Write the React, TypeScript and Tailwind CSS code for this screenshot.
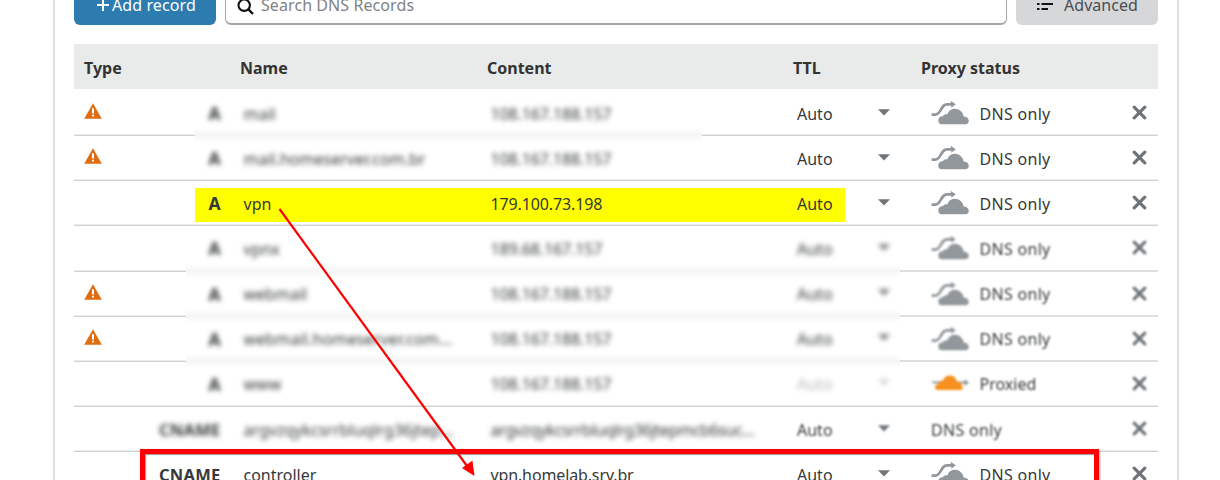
import React from 'react';

type Mode = 'sharp' | 'soft' | 'blur';

interface DnsRecord {
  type: string;
  name: string;
  content: string;
  warn?: boolean;
  text: Mode;
  ttl: Mode;
  status: Mode;
  proxy: 'dns' | 'proxied' | 'none';
  faded?: boolean;
  highlight?: boolean;
  rule: 'full' | 'left' | 'middle';
}

const records: DnsRecord[] = [
  { type: 'A', name: 'mail', content: '108.167.188.157', warn: true, text: 'blur', ttl: 'sharp', status: 'sharp', proxy: 'dns', rule: 'left' },
  { type: 'A', name: 'mail.homeserver.com.br', content: '108.167.188.157', warn: true, text: 'blur', ttl: 'sharp', status: 'sharp', proxy: 'dns', rule: 'full' },
  { type: 'A', name: 'vpn', content: '179.100.73.198', text: 'sharp', ttl: 'sharp', status: 'sharp', proxy: 'dns', highlight: true, rule: 'full' },
  { type: 'A', name: 'vpnx', content: '189.68.167.157', text: 'blur', ttl: 'blur', status: 'soft', proxy: 'dns', rule: 'middle' },
  { type: 'A', name: 'webmail', content: '108.167.188.157', warn: true, text: 'blur', ttl: 'blur', status: 'soft', proxy: 'dns', rule: 'middle' },
  { type: 'A', name: 'webmail.homeserver.com...', content: '108.167.188.157', warn: true, text: 'blur', ttl: 'blur', status: 'soft', proxy: 'dns', rule: 'middle' },
  { type: 'A', name: 'www', content: '108.167.188.157', text: 'blur', ttl: 'blur', status: 'soft', proxy: 'proxied', faded: true, rule: 'full' },
  { type: 'CNAME', name: 'argvzqykcsrrbluqlrg36jtep...', content: 'argvzqykcsrrbluqlrg36jtepmcb6suc...', text: 'blur', ttl: 'soft', status: 'soft', proxy: 'none', rule: 'full' },
  { type: 'CNAME', name: 'controller', content: 'vpn.homelab.srv.br', text: 'sharp', ttl: 'sharp', status: 'sharp', proxy: 'dns', rule: 'full' },
];

const blurClass: Record<Mode, string> = {
  sharp: '',
  soft: 'blur-[0.8px]',
  blur: 'blur-[2.8px]',
};

const grid = 'grid grid-cols-[157px_247px_306px_128px_1fr]';
const line = 'h-[2px] border-t border-[#ececed] bg-[#d0d1d3]';

function Warning() {
  return (
    <svg width="18" height="16" viewBox="0 0 18 16">
      <path d="M9 0.300 17.800 15.700H0.200Z" fill="#e06d10" />
      <path d="M8 5.200h2v5.300H8zM8 11.700h2v1.900H8z" fill="#fff" />
    </svg>
  );
}

function GreyCloud() {
  return (
    <svg width="38" height="25" viewBox="0 0 38 25" fill="#92979b">
      <path d="M0.600 14.600h3.800c2.600 0 3.600-1.600 5.200-4.400 1.800-3.400 3.200-5.900 6.600-5.900h4" fill="none" stroke="#92979b" strokeWidth="2.700" />
      <path d="M19.600 0.800 24.800 4.300 20.400 7.800Z" />
      <path
        d="M10.600 24.200C8.600 24.200 7.300 22.600 7.300 20.500c0-2.500 1.800-4.500 4.700-4.200.5-1.500 2.300-2.500 4.300-1.800C17.300 11 20.200 8.700 23.700 8.700c4.600 0 8.200 3.200 8.900 7.700 3 .1 5.200 1.900 5.200 4.300 0 2.100-1.300 3.500-3.300 3.500z"
        stroke="#fff"
        strokeWidth="1.800"
        paintOrder="stroke"
      />
    </svg>
  );
}

function OrangeCloud() {
  return (
    <svg width="38" height="16" viewBox="0 0 38 16">
      <path d="M0 6.600h34v2H2.500z" fill="#92979b" />
      <path d="M33.500 4.200 38 7.600 33.500 11Z" fill="#92979b" />
      <path d="M6.500 15C4.300 15 3.700 13 4.200 11.300c.5-1.600 2-2.300 3.300-2.100C7.700 6.500 9.800 5 12 5.700c.8-3.400 3.900-5.400 7-5.300 3.700.1 6.400 2.500 6.900 6.100 3 .2 6 2.600 5.600 7.100 0 .9-.4 1.400-1.200 1.400z" fill="#f6901e" />
    </svg>
  );
}

function Cross() {
  return (
    <svg width="15" height="15" viewBox="0 0 15 15">
      <path d="M2.200 2.200 12.800 12.800M12.800 2.200 2.200 12.800" stroke="#6f7479" strokeWidth="3.200" strokeLinecap="round" />
    </svg>
  );
}

function Rule({ kind }: { kind: DnsRecord['rule'] }) {
  if (kind === 'full') return <div className={`${line} w-full`} />;
  const left = kind === 'left';
  return (
    <div className="flex h-[2px] w-full items-end">
      <div className={`${line} ${left ? 'w-[121px]' : 'w-[112px]'}`} />
      <div className={`h-[14px] shrink-0 translate-y-[6px] bg-linear-to-b from-white via-[#f5f5f5] to-white ${left ? 'w-[507px]' : 'w-[714px]'}`} />
      <div className={left ? `${line} flex-1` : 'h-[2px] flex-1 bg-[#dddfe0] blur-[0.6px]'} />
    </div>
  );
}

function contentTracking(content: string) {
  return content.endsWith('...') ? '-tracking-[0.38px]' : 'tracking-[-0.13px]';
}

function Row({ r }: { r: DnsRecord }) {
  return (
    <div className="relative flex h-[45.15px] shrink-0 flex-col">
      {r.highlight && <div className="absolute top-[7px] left-[121px] h-[34px] w-[650px] bg-[#ffff00]" />}
      <div className={`${grid} relative z-10 min-h-0 flex-1 items-center`}>
        <div className="flex items-center justify-between pr-[10.5px] pl-[10px]">
          <span className="-mt-[3px]">{r.warn && <Warning />}</span>
          <span className={`font-bold ${r.type === 'A' ? 'pt-px text-[17.5px]' : 'pt-[2px] text-[16.5px] tracking-[0.25px]'} ${blurClass[r.text]}`}>{r.type}</span>
        </div>
        <div className={`pt-[2px] pl-[12.5px] whitespace-nowrap ${r.name.startsWith('webmail.') ? 'tracking-[0.13px]' : ''} ${blurClass[r.text]}`}>{r.name}</div>
        <div className={`pt-[2px] pl-[12.5px] whitespace-nowrap ${contentTracking(r.content)} ${blurClass[r.text]}`}>{r.content}</div>
        <div className={`flex items-center justify-between pr-[22px] pl-[13px] ${blurClass[r.ttl]} ${r.faded ? 'opacity-35' : ''}`}>
          <span className="pt-[2px]">Auto</span>
          <svg width="12" height="7" viewBox="0 0 12 7" className="-mt-px">
            <path d="M0 0.300h12L6 6.500Z" fill="#6f7479" />
          </svg>
        </div>
        <div className={`flex items-center justify-between pr-[11.5px] pl-[19px] ${blurClass[r.status]}`}>
          <div className="flex items-center">
            {r.proxy === 'dns' && <span className="w-[48.5px]"><GreyCloud /></span>}
            {r.proxy === 'proxied' && <span className="w-[48.5px]"><OrangeCloud /></span>}
            <span className={`pt-[2px] whitespace-nowrap ${r.proxy === 'proxied' ? '' : 'tracking-[0.3px]'}`}>{r.proxy === 'proxied' ? 'Proxied' : 'DNS only'}</span>
          </div>
          <Cross />
        </div>
      </div>
      <Rule kind={r.rule} />
    </div>
  );
}

export default function App() {
  return (
    <div className="relative h-[480px] w-[1220px] overflow-hidden bg-white font-['Noto_Sans','Open_Sans',sans-serif] text-base leading-6 text-[#36393a]">
      <div className="ml-[53px] h-full w-[1126px] border-x-2 border-[#dfe0e2] pr-[19px] pl-[19px]">
        <div className="flex h-[44px] items-start">
          <div className="-mt-[20px] flex h-[45px] w-[142px] shrink-0 items-end rounded-[6px] bg-[#2c7cb0] pb-[8px] pl-[23px] text-white">
            <svg width="12" height="12" viewBox="0 0 12 12" className="mr-[3px] mb-[6px]">
              <path d="M6 0v12M0 6h12" stroke="#fff" strokeWidth="2" />
            </svg>
            <span className="tracking-[0.1px]">Add record</span>
          </div>
          <div className="-mt-[20px] ml-[9px] flex h-[45px] w-[782px] shrink-0 items-end rounded-[6px] border-[1.5px] border-b-2 border-[#a3a7ab] bg-white pb-[6px] pl-[11px] text-[#808285]">
            <svg width="17" height="17" viewBox="0 0 17 17" className="mr-[7px] mb-[2px]">
              <circle cx="7.200" cy="7.200" r="5.700" fill="none" stroke="#111" strokeWidth="2.100" />
              <path d="M11.200 11.200 16 16" stroke="#111" strokeWidth="2.400" />
            </svg>
            <span className="tracking-[0.08px]">Search DNS Records</span>
          </div>
          <div className="-mt-[20px] ml-[9px] flex h-[45px] w-[142px] shrink-0 items-end rounded-[6px] bg-[#d5d7d8] pb-[8px] pl-[21px]">
            <svg width="16" height="13" viewBox="0 0 16 13" className="mr-[11px] mb-[6px]" fill="#111">
              <path d="M0 0h2.500v1.800H0zM4.500 0H16v1.800H4.500zM0 5h2.500v2H0zM4.500 5H16v2H4.500zM0 10h2.500v2H0zM4.500 10H11v2H4.500z" />
            </svg>
            <span className="tracking-[0.05px] text-[#4a4d50]">Advanced</span>
          </div>
        </div>
        <div className={`${grid} h-[45px] items-center bg-[#e9eaea] pt-[3px] font-bold text-[#333]`}>
          <div className="pl-[10px]">Type</div>
          <div className="pl-[9px]">Name</div>
          <div className="pl-[9px]">Content</div>
          <div className="pl-[9px]">TTL</div>
          <div className="pl-[9px]">Proxy status</div>
        </div>
        <div className="flex flex-col pt-[2px]">
          {records.map((r, i) => <Row key={i} r={r} />)}
        </div>
      </div>
      <div className="absolute top-[449px] left-[140px] z-20 h-[60px] w-[959px] border-[5px] border-[#fe0000] shadow-[inset_1px_1px_1px_#999,1px_1px_2px_#aaa]" />
      <svg className="absolute top-0 left-0 z-30" width="1220" height="480" viewBox="0 0 1220 480">
        <path d="M279.500 209 467 466" stroke="#fe0000" strokeWidth="2.200" />
        <path d="M474.500 476 462 468 472.500 460.500Z" fill="#fe0000" />
      </svg>
    </div>
  );
}
